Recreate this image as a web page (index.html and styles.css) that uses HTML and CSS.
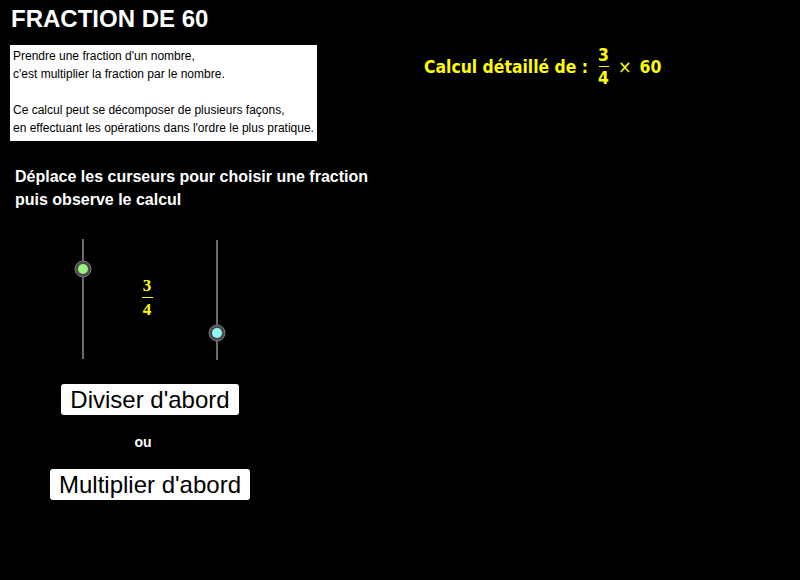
FILE: index.html
```html
<!DOCTYPE html>
<html lang="fr">
<head>
<meta charset="utf-8">
<title>Fraction de 60</title>
<link rel="stylesheet" href="styles.css">
</head>
<body>
<div class="stage">
  <div class="left">
    <h1 class="title">FRACTION DE 60</h1>
    <div class="note">
      <div>Prendre une fraction d'un nombre,</div>
      <div>c'est multiplier la fraction par le nombre.</div>
      <div class="blank">&nbsp;</div>
      <div>Ce calcul peut se décomposer de plusieurs façons,</div>
      <div>en effectuant les opérations dans l'ordre le plus pratique.</div>
    </div>
    <p class="instr">Déplace les curseurs pour choisir une fraction<br>puis observe le calcul</p>
    <div class="sliders">
      <svg class="slider-svg" width="300" height="140" viewBox="0 0 300 140">
        <line x1="83" y1="9" x2="83" y2="129" stroke="#6a6a6a" stroke-width="2"/>
        <circle cx="83" cy="39" r="8" fill="#4a4a4a" stroke="#7a7a7a" stroke-width="1"/>
        <circle cx="83" cy="39" r="5" fill="#99f27f"/>
        <line x1="217" y1="10" x2="217" y2="130" stroke="#6a6a6a" stroke-width="2"/>
        <circle cx="217" cy="103" r="8" fill="#4a4a4a" stroke="#7a7a7a" stroke-width="1"/>
        <circle cx="217" cy="103" r="5" fill="#8ef7f7"/>
      </svg>
      <div class="mini-frac">
        <span class="mf-num">3</span>
        <span class="mf-bar"></span>
        <span class="mf-den">4</span>
      </div>
    </div>
    <div class="btn-row first"><span class="btn">Diviser d'abord</span></div>
    <div class="ou">ou</div>
    <div class="btn-row second"><span class="btn">Multiplier d'abord</span></div>
  </div>
  <div class="right">
    <div class="formula">
      <span class="f-label">Calcul détaillé de :</span>
      <span class="frac">
        <span class="num">3</span>
        <span class="bar"></span>
        <span class="den">4</span>
      </span>
      <span class="times">×</span>
      <span class="f-val">60</span>
    </div>
  </div>
</div>
</body>
</html>
```

FILE: styles.css
```css
html, body {
  margin: 0;
  padding: 0;
  background: #000;
}
.stage {
  width: 800px;
  height: 580px;
  background: #000;
  display: grid;
  grid-template-columns: 300px 1fr;
  overflow: hidden;
  font-family: "Liberation Sans", Arial, sans-serif;
}
.left {
  display: flex;
  flex-direction: column;
}
.title {
  margin: 0;
  padding: 7px 0 0 11px;
  font-size: 24px;
  line-height: 23px;
  font-weight: bold;
  color: #fff;
}
.note {
  margin: 15px 0 0 10px;
  width: 307px;
  height: 96px;
  box-sizing: border-box;
  padding: 2px 3px;
  background: #fff;
  color: #000;
  font-size: 12px;
  line-height: 18px;
  white-space: nowrap;
}
.instr {
  margin: 24px 0 0 15px;
  color: #fff;
  font-weight: bold;
  font-size: 16px;
  line-height: 23px;
  white-space: nowrap;
}
.sliders {
  position: relative;
  margin-top: 19px;
  height: 140px;
}
.slider-svg {
  display: block;
}
.mini-frac {
  position: absolute;
  left: 140px;
  top: 47px;
  width: 14px;
  display: flex;
  flex-direction: column;
  align-items: center;
  font-family: "Liberation Serif", "Times New Roman", serif;
  font-weight: bold;
  font-size: 17px;
  line-height: 17px;
  color: #ffff00;
}
.mf-bar {
  width: 11px;
  height: 1px;
  background: #ffff00;
  margin: 3px 0 3px;
}
.btn-row {
  display: flex;
  justify-content: center;
}
.btn-row.first {
  margin-top: 14px;
}
.btn-row.second {
  margin-top: 17px;
}
.btn {
  display: inline-block;
  height: 31px;
  line-height: 31px;
  padding: 0 9px;
  background: #fff;
  color: #000;
  border-radius: 3px;
  font-size: 24px;
}
.ou {
  margin-top: 17px;
  text-align: center;
  padding-right: 14px;
  color: #fff;
  font-weight: bold;
  font-size: 14px;
  line-height: 20px;
}
.right {
  padding: 46px 0 0 124px;
}
.formula {
  display: flex;
  align-items: center;
  color: #ffff00;
  font-family: "DejaVu Sans", sans-serif;
  font-stretch: condensed;
  font-weight: bold;
  font-size: 17.4px;
}
.f-label {
  white-space: nowrap;
}
.frac {
  display: flex;
  flex-direction: column;
  align-items: center;
  margin-left: 10px;
  line-height: 18px;
}
.bar {
  width: 10px;
  height: 1px;
  background: #ffff00;
  margin: 2px 0;
}
.times {
  margin-left: 9px;
  font-weight: normal;
  font-size: 18px;
}
.f-val {
  margin-left: 8px;
}
```
